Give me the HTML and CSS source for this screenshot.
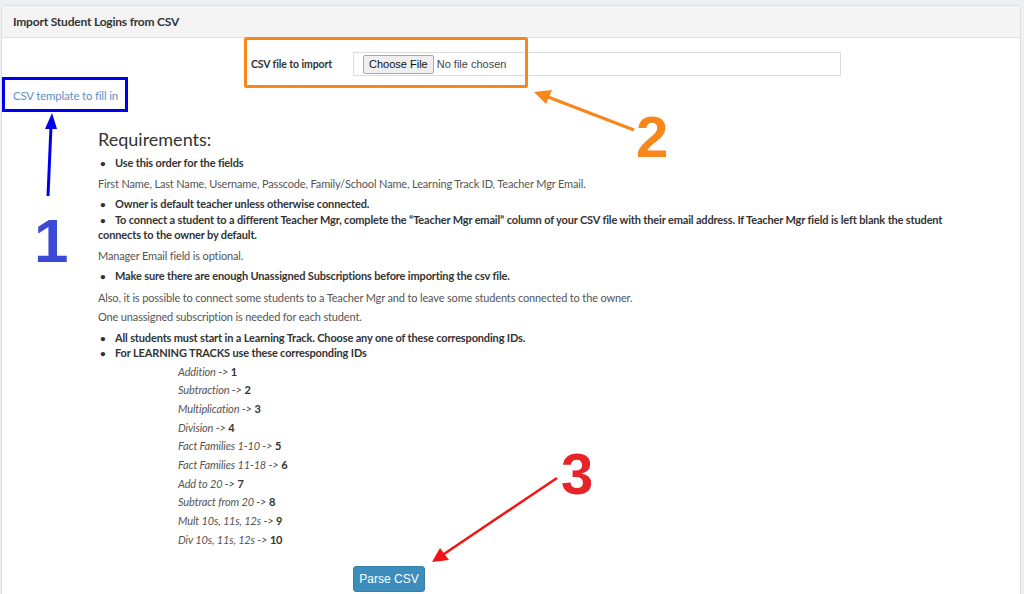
FILE: index.html
```html
<!DOCTYPE html>
<html>
<head>
<meta charset="utf-8">
<link rel="stylesheet" href="styles.css">
</head>
<body>
<div class="panel">
  <div class="panel-head">Import Student Logins from CSV</div>
  <div class="panel-body">
    <div class="form-row">
      <label class="form-label">CSV file to import</label>
      <div class="file-box">
        <span class="file-btn">Choose File</span>
        <span class="file-none">No file chosen</span>
      </div>
    </div>
    <div class="template-row"><a class="template-link">CSV template to fill in</a></div>
    <div class="req">
      <h3 class="req-title">Requirements:</h3>
      <ul class="blist"><li>Use this order for the fields</li></ul>
      <p class="note">First Name, Last Name, Username, Passcode, Family/School Name, Learning Track ID, Teacher Mgr Email.</p>
      <ul class="blist">
        <li>Owner is default teacher unless otherwise connected.</li>
        <li>To connect a student to a different Teacher Mgr, complete the “Teacher Mgr email” column of your CSV file with their email address. If Teacher Mgr field is left blank the student connects to the owner by default.</li>
      </ul>
      <p class="note">Manager Email field is optional.</p>
      <ul class="blist"><li>Make sure there are enough Unassigned Subscriptions before importing the csv file.</li></ul>
      <p class="note note-wide">Also, it is possible to connect some students to a Teacher Mgr and to leave some students connected to the owner.</p>
      <p class="note note-tight">One unassigned subscription is needed for each student.</p>
      <ul class="blist blist-wide">
        <li>All students must start in a Learning Track. Choose any one of these corresponding IDs.</li>
        <li>For LEARNING TRACKS use these corresponding IDs</li>
      </ul>
      <div class="tracks">
        <p><em>Addition -&gt;</em> <b>1</b></p>
        <p><em>Subtraction -&gt;</em> <b>2</b></p>
        <p><em>Multiplication -&gt;</em> <b>3</b></p>
        <p><em>Division -&gt;</em> <b>4</b></p>
        <p><em>Fact Families 1-10 -&gt;</em> <b>5</b></p>
        <p><em>Fact Families 11-18 -&gt;</em> <b>6</b></p>
        <p><em>Add to 20 -&gt;</em> <b>7</b></p>
        <p><em>Subtract from 20 -&gt;</em> <b>8</b></p>
        <p><em>Mult 10s, 11s, 12s -&gt;</em> <b>9</b></p>
        <p><em>Div 10s, 11s, 12s -&gt;</em> <b>10</b></p>
      </div>
    </div>
    <div class="submit-row"><button class="parse-btn">Parse CSV</button></div>
  </div>
</div>

<svg class="annot" width="1024" height="594" viewBox="0 0 1024 594">
  <rect x="245.5" y="38.5" width="281" height="48" rx="1" fill="none" stroke="#f7861b" stroke-width="3"/>
  <line x1="634" y1="130" x2="548" y2="97" stroke="#f7861b" stroke-width="3"/>
  <polygon points="534,92 552,90 546,104" fill="#f7861b"/>
  <text x="636" y="157" class="num num2">2</text>

  <rect x="3.5" y="78.5" width="123" height="32" fill="none" stroke="#0000f0" stroke-width="3"/>
  <line x1="48" y1="196" x2="51" y2="126" stroke="#0000f0" stroke-width="3"/>
  <polygon points="52,113 45,129 57,129" fill="#0000f0"/>
  <text x="34" y="262" class="num num1">1</text>

  <line x1="557" y1="478" x2="444" y2="554" stroke="#f01414" stroke-width="2.5"/>
  <polygon points="432,562 440,548 449,560" fill="#f01414"/>
  <text x="561" y="494" class="num num3">3</text>
</svg>
</body>
</html>
```
FILE: styles.css
```css
html, body { margin: 0; padding: 0; }
body {
  background: #edf0f3;
  font-family: "Lato", "Open Sans", sans-serif;
  color: #555;
  width: 1024px;
  height: 594px;
  overflow: hidden;
  position: relative;
}
.panel {
  margin: 5px 3px 0 1px;
  background: #fff;
  border: 1px solid #dedede;
  border-radius: 3px 3px 0 0;
  height: 600px;
}
.panel-head {
  height: 31px;
  line-height: 31px;
  background: #f4f4f4;
  border-bottom: 1px solid #dedede;
  padding-left: 11px;
  font-weight: bold;
  font-size: 12px;
  letter-spacing: -0.2px;
  color: #333;
}
.form-row {
  display: flex;
  align-items: center;
  height: 24px;
  margin: 14px 0 0 249px;
}
.form-label {
  width: 102px;
  font-size: 10.5px;
  letter-spacing: -0.1px;
  font-weight: bold;
  color: #333;
}
.file-box {
  width: 477px;
  height: 22px;
  border: 1px solid #dcdcdc;
  display: flex;
  align-items: center;
  padding-left: 9px;
  font-family: "Liberation Sans", Arial, sans-serif;
  font-size: 11px;
}
.file-btn {
  display: inline-block;
  background: #efefef;
  border: 1px solid #aaa;
  border-radius: 2px;
  padding: 2px 5px;
  color: #111;
  line-height: 13px;
}
.file-none { margin-left: 3px; color: #444; }
.template-row { margin: 10px 0 0 11px; height: 16px; line-height: 16px; }
.template-link { color: #5d8fc4; font-size: 11.5px; letter-spacing: -0.2px; }
.req { margin-left: 96px; letter-spacing: -0.15px; }
.req-title {
  margin: 26px 0 0 0;
  font-size: 18px;
  font-weight: normal;
  color: #333;
  line-height: 22px;
  letter-spacing: 0;
}
.blist {
  list-style: none;
  margin: 5px 0 0 0;
  padding: 0;
  font-size: 11px;
  font-weight: bold;
  color: #333;
  width: 870px;
}
.blist li { line-height: 15.5px; }
.blist li::before {
  content: "\2022";
  display: inline-block;
  width: 15px;
  padding-left: 2px;
  font-size: 10px;
  line-height: 1;
}
.blist-wide { margin-top: 6px; }
.note { margin: 5.5px 0 0 0; font-size: 11px; line-height: 15px; color: #555; }
.note-wide { margin-top: 6px; }
.note-tight { margin-top: 4px; }
.tracks { margin: 2px 0 0 80px; font-size: 11px; }
.tracks p { margin: 0; line-height: 18.7px; }
.tracks em { color: #555; }
.tracks b { color: #333; }
.submit-row { margin: 16px 0 0 351px; }
.parse-btn {
  background: #3c8dbc;
  border: 1px solid #367fa9;
  border-radius: 3px;
  color: #fff;
  font-family: "Liberation Sans", Arial, sans-serif;
  font-size: 12px;
  width: 72px;
  height: 26px;
  padding: 0;
}
.annot { position: absolute; left: 0; top: 0; pointer-events: none; }
.num { font-family: "Liberation Sans", Arial, sans-serif; font-weight: bold; font-size: 58px; }
.num1 { fill: #3a49d6; font-size: 62px; }
.num2 { fill: #f7861b; }
.num3 { fill: #e8242b; }
```
